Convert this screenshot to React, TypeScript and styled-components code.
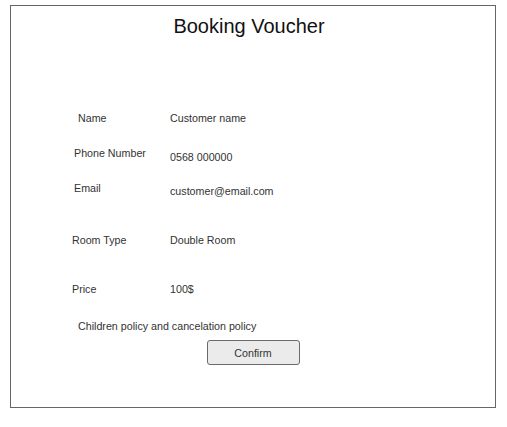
import React from "react";
import styled, { createGlobalStyle } from "styled-components";

const Global = createGlobalStyle`
  html, body { margin: 0; padding: 0; background: #ffffff; }
  body { font-family: "Liberation Sans", Arial, sans-serif; }
`;

const Page = styled.div`
  padding: 5px 0 0 10px;
`;

const Voucher = styled.div`
  box-sizing: border-box;
  width: 486px;
  height: 403px;
  border: 1px solid #666666;
  display: flex;
  flex-direction: column;
  background: #fff;
`;

const Title = styled.h1`
  margin: 8px 0 0;
  padding-right: 8px;
  font-size: 20px;
  line-height: 24px;
  font-weight: 400;
  color: #111;
  text-align: center;
`;

const Row = styled.div<{ $gap: number }>`
  display: grid;
  grid-template-columns: 98px 1fr;
  padding-left: 61px;
  margin-top: ${(p) => p.$gap}px;
  font-size: 10.7px;
  line-height: 14px;
  color: #333;
`;

const Label = styled.span<{ $indent: number; $drop: number }>`
  padding-left: ${(p) => p.$indent}px;
  padding-top: ${(p) => p.$drop}px;
`;

const Value = styled.span<{ $drop: number }>`
  padding-top: ${(p) => p.$drop}px;
`;

const Policy = styled.p`
  margin: 23px 0 0;
  padding-left: 67px;
  font-size: 10.7px;
  line-height: 14px;
  color: #333;
`;

const Actions = styled.div`
  display: flex;
  justify-content: center;
  margin-top: 7px;
`;

const Confirm = styled.button`
  box-sizing: border-box;
  width: 93px;
  height: 25px;
  border: 1px solid #6a6a6a;
  border-radius: 3px;
  background: #ebebeb;
  font-family: "Liberation Sans", Arial, sans-serif;
  font-size: 10.7px;
  color: #333;
  padding: 0;
  cursor: pointer;
`;

const fields = [
  { label: "Name", value: "Customer name", gap: 73, indent: 6, labelDrop: 0, valueDrop: 0 },
  { label: "Phone Number", value: "0568 000000", gap: 21, indent: 2, labelDrop: 0, valueDrop: 4 },
  { label: "Email", value: "customer@email.com", gap: 17, indent: 2, labelDrop: 0, valueDrop: 3 },
  { label: "Room Type", value: "Double Room", gap: 35, indent: 0, labelDrop: 0, valueDrop: 0 },
  { label: "Price", value: "100$", gap: 35, indent: 0, labelDrop: 0, valueDrop: 0 },
];

export default function App() {
  return (
    <>
      <Global />
      <Page>
        <Voucher>
          <Title>Booking Voucher</Title>
          {fields.map((f) => (
            <Row key={f.label} $gap={f.gap}>
              <Label $indent={f.indent} $drop={f.labelDrop}>{f.label}</Label>
              <Value $drop={f.valueDrop}>{f.value}</Value>
            </Row>
          ))}
          <Policy>Children policy and cancelation policy</Policy>
          <Actions>
            <Confirm>Confirm</Confirm>
          </Actions>
        </Voucher>
      </Page>
    </>
  );
}
